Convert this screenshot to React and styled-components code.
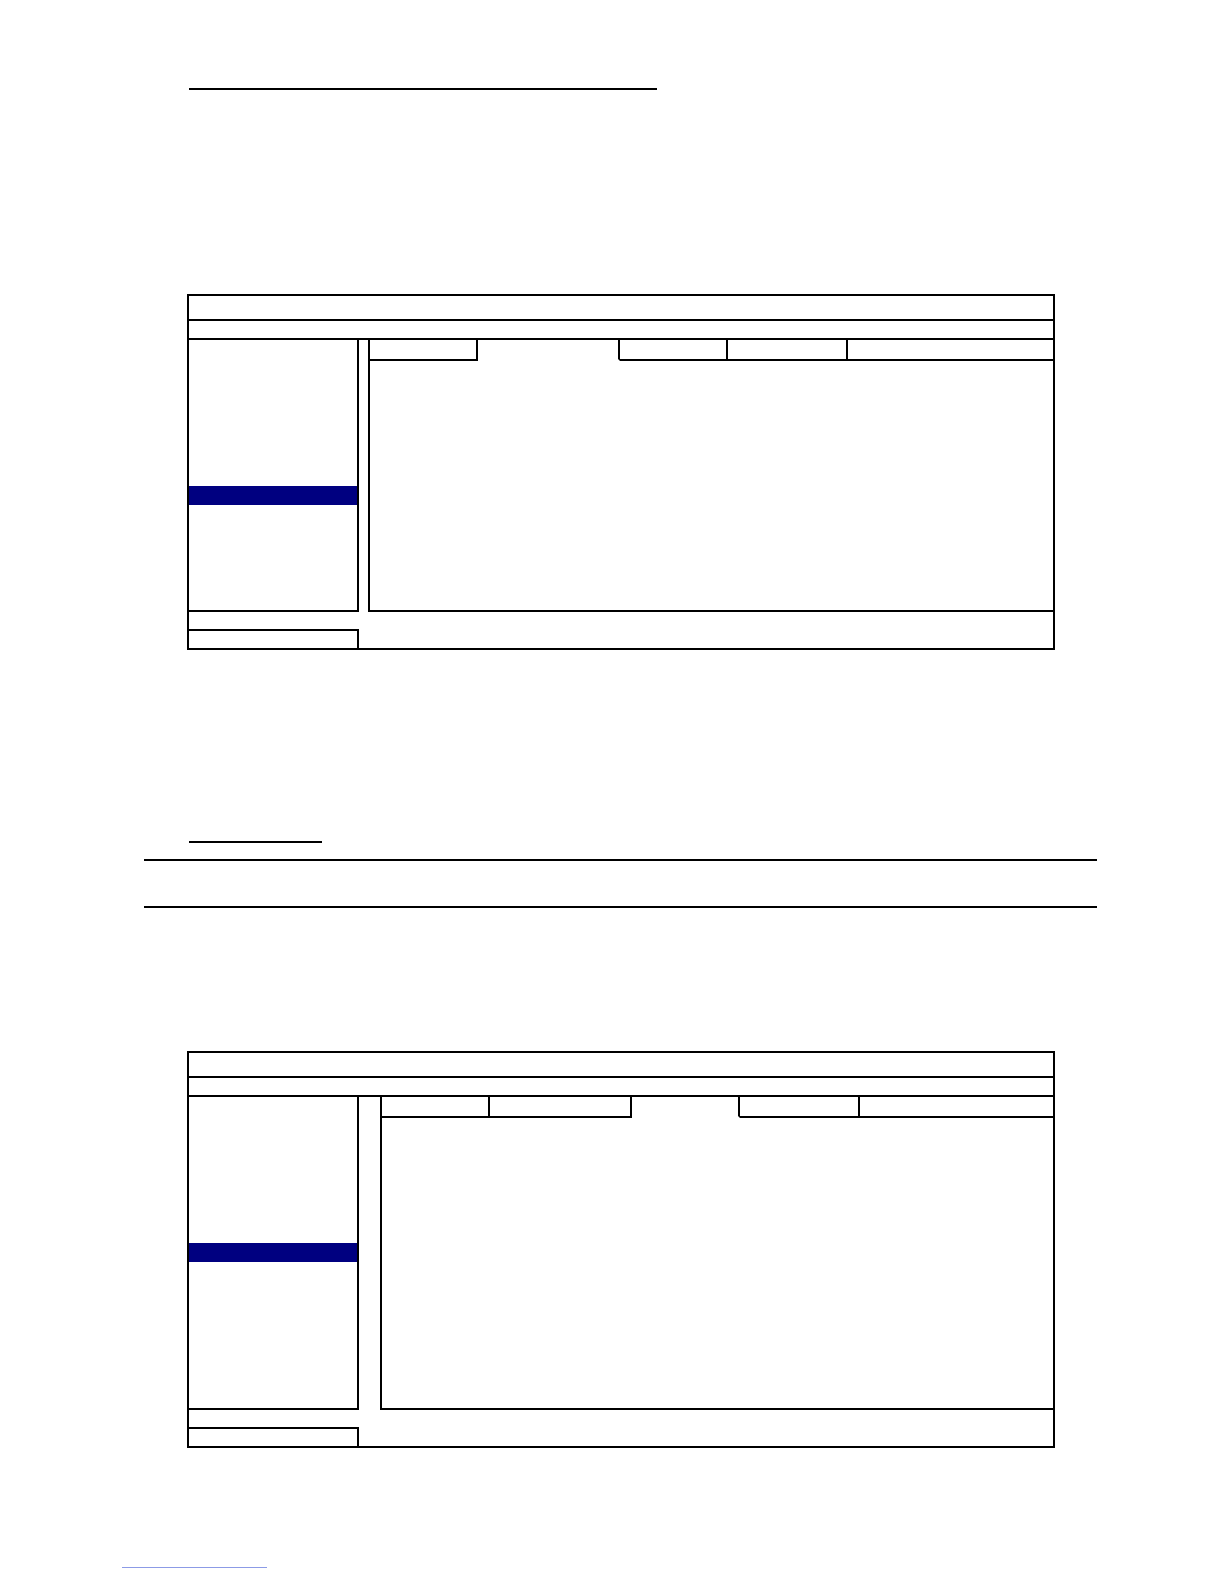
import React from 'react'
import styled, { createGlobalStyle } from 'styled-components'

const GlobalStyle = createGlobalStyle`
  * { box-sizing: border-box; }
  body {
    margin: 0;
    background: #fff;
    font-family: 'Liberation Sans', Arial, sans-serif;
  }
`;

const Page = styled.div`
  width: 1224px;
  min-height: 1584px;
  padding-top: 88px;
  display: flex;
  flex-direction: column;
  align-items: flex-start;
`;

const Rule = styled.div`
  margin-top: ${p => p.$top || 0}px;
  margin-left: ${p => p.$left}px;
  width: ${p => p.$width}px;
  height: ${p => p.$thick || 2}px;
  background: ${p => p.$color || '#000'};
`;

const Window = styled.div`
  margin-top: ${p => p.$top}px;
  margin-left: 187px;
  width: 868px;
  border: 2px solid #000;
  display: flex;
  flex-direction: column;
`;

const TitleBar = styled.div`
  height: 25px;
  border-bottom: 2px solid #000;
`;

const MenuBar = styled.div`
  height: 19px;
  border-bottom: 2px solid #000;
`;

const Body = styled.div`
  height: ${p => p.$height}px;
  display: flex;
`;

const Sidebar = styled.ul`
  list-style: none;
  margin: 0;
  padding: 146px 0 0;
  width: 170px;
  flex-shrink: 0;
  border-right: 2px solid #000;
  border-bottom: 2px solid #000;
`;

const MenuItem = styled.li`
  height: 19px;
  background: ${p => (p.$selected ? '#000080' : 'transparent')};
`;

const Content = styled.div`
  flex: 1;
  margin-left: ${p => p.$gap}px;
  border-left: 2px solid #000;
  border-bottom: 2px solid #000;
  display: flex;
  flex-direction: column;
`;

const Tabs = styled.div`
  display: flex;
  height: 21px;
`;

const Tab = styled.div`
  width: ${p => (p.$width ? `${p.$width}px` : 'auto')};
  flex: ${p => (p.$width ? '0 0 auto' : '1')};
  border-right: ${p => (p.$last ? 'none' : '2px solid #000')};
  border-bottom: 2px solid ${p => (p.$active ? 'transparent' : '#000')};
`;

const Panel = styled.div`
  flex: 1;
`;

const StatusRow = styled.div`
  height: 17px;
`;

const Footer = styled.div`
  display: flex;
  height: 19px;
`;

const FooterBox = styled.div`
  width: 170px;
  border-top: 2px solid #000;
  border-right: 2px solid #000;
`;

const tabWidths = [108, 142, 108, 120, null];

const SetupWindow = ({ top, bodyHeight, gap, activeTab }) => (
  <Window $top={top}>
    <TitleBar />
    <MenuBar />
    <Body $height={bodyHeight}>
      <Sidebar>
        <MenuItem $selected />
      </Sidebar>
      <Content $gap={gap}>
        <Tabs>
          {tabWidths.map((w, i) => (
            <Tab
              key={i}
              $width={w}
              $active={i === activeTab}
              $last={i === tabWidths.length - 1}
            />
          ))}
        </Tabs>
        <Panel />
      </Content>
    </Body>
    <StatusRow />
    <Footer>
      <FooterBox />
    </Footer>
  </Window>
);

const App = () => (
  <>
    <GlobalStyle />
    <Page>
      <Rule $left={189} $width={468} />
      <SetupWindow top={204} bodyHeight={272} gap={9} activeTab={1} />
      <Rule $top={191} $left={189} $width={133} />
      <Rule $top={16} $left={144} $width={953} />
      <Rule $top={45} $left={144} $width={953} />
      <SetupWindow top={143} bodyHeight={313} gap={21} activeTab={2} />
      <Rule $top={119} $left={122} $width={145} $thick={1} $color="#8c9be6" />
    </Page>
  </>
);

export default App
